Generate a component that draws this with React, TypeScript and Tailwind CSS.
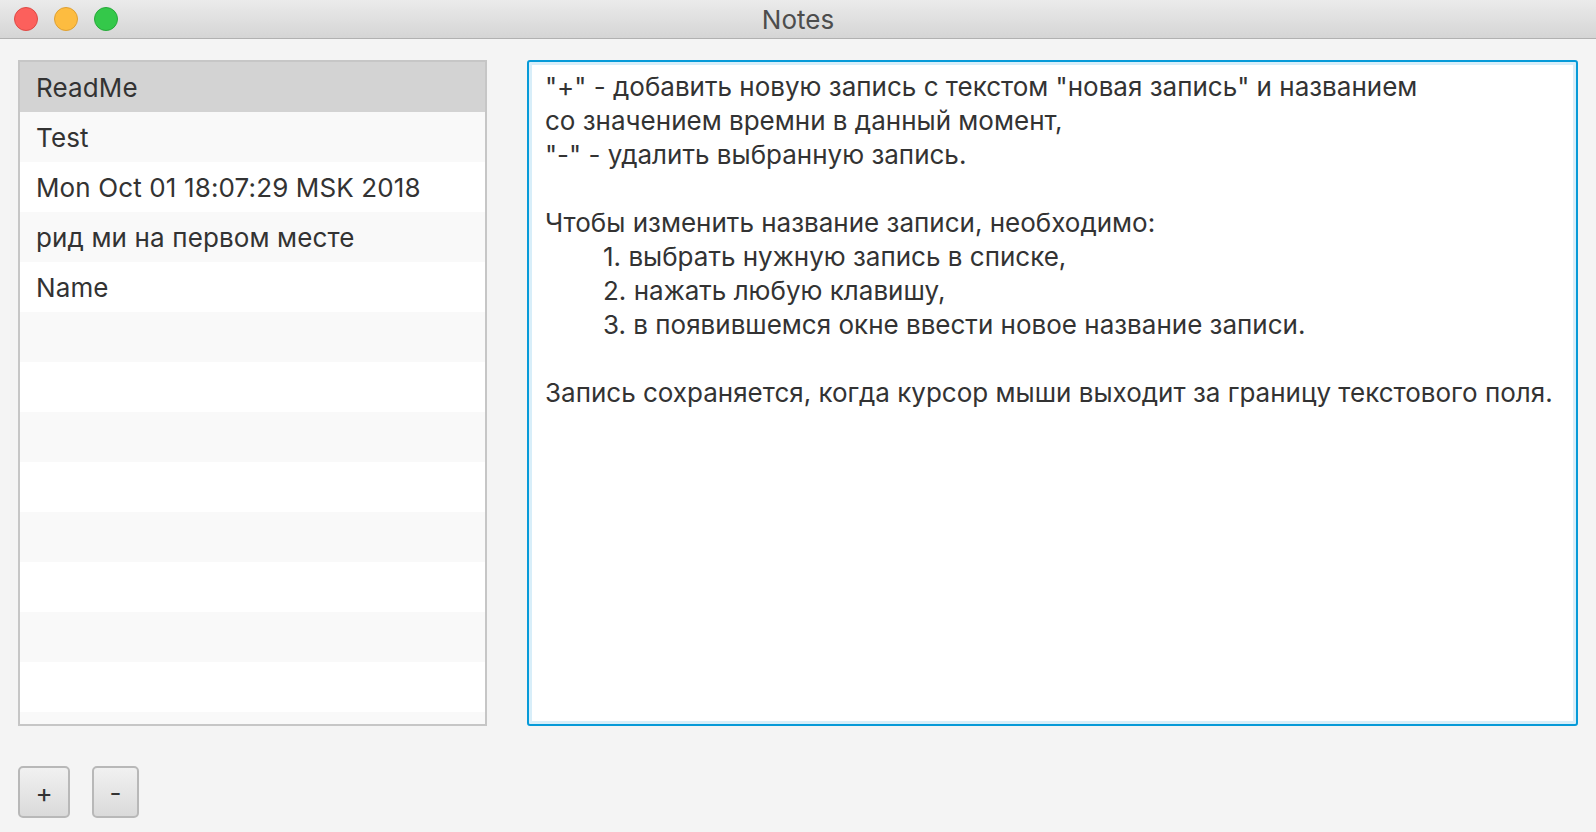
const rows = ["ReadMe", "Test", "Mon Oct 01 18:07:29 MSK 2018", "рид ми на первом месте", "Name"];

const lines: { text: string; indent?: boolean }[] = [
  { text: '"+" - добавить новую запись с текстом "новая запись" и названием' },
  { text: "со значением времни в данный момент," },
  { text: '"-" - удалить выбранную запись.' },
  { text: "" },
  { text: "Чтобы изменить название записи, необходимо:" },
  { text: "1. выбрать нужную запись в списке,", indent: true },
  { text: "2. нажать любую клавишу,", indent: true },
  { text: "3. в появившемся окне ввести новое название записи.", indent: true },
  { text: "" },
  { text: "Запись сохраняется, когда курсор мыши выходит за границу текстового поля." },
];

function App() {
  const slots = Array.from({ length: 14 }, (_, i) => rows[i] ?? "");
  return (
    <div className="w-[1596px] h-[832px] overflow-hidden bg-[#f4f4f4] flex flex-col font-['Inter','Noto_Sans',sans-serif] text-[#333333]">
      <div className="h-[39px] shrink-0 flex items-center relative bg-gradient-to-b from-[#ebebeb] to-[#d5d5d5] border-b border-[#b1b1b1]">
        <div className="flex gap-[16px] pl-[14px]">
          <span className="w-[24px] h-[24px] rounded-full bg-[#fc605c] border border-[#de4a45]" />
          <span className="w-[24px] h-[24px] rounded-full bg-[#fdbc40] border border-[#dea033]" />
          <span className="w-[24px] h-[24px] rounded-full bg-[#34c84a] border border-[#27a93a]" />
        </div>
        <div className="absolute inset-0 flex items-center justify-center text-[26px] text-[#4d4d4d]">Notes</div>
      </div>

      <div className="flex gap-[40px] px-[18px] pt-[21px]">
        <div className="w-[469px] h-[666px] shrink-0 border-2 border-[#c6c6c6] bg-white overflow-hidden">
          {slots.map((r, i) => (
            <div
              key={i}
              className={
                "h-[50px] flex items-center pl-[16px] text-[26px] tracking-[0.005em] whitespace-nowrap " +
                (i === 0 ? "bg-[#d3d3d3]" : i % 2 === 1 ? "bg-[#f9f9f9]" : "bg-white")
              }
            >
              {r}
            </div>
          ))}
        </div>

        <div className="flex-1 h-[666px] rounded-[3px] border-[2.5px] border-[#069ad8] bg-white shadow-[inset_0_0_0_3px_#d8eef9] pt-[8px] pl-[16px] text-[26px]">
          {lines.map((l, i) => (
            <div key={i} className={"h-[34px] leading-[34px] whitespace-nowrap " + (l.indent ? "pl-[58px]" : "")}>
              {l.text}
            </div>
          ))}
        </div>
      </div>

      <div className="flex gap-[22px] px-[18px] mt-[40px]">
        <button className="w-[52px] h-[52px] rounded-[5px] border-2 border-[#b8b8b8] bg-gradient-to-b from-[#f1f1f1] to-[#dadada] text-[26px] text-[#333]">
          +
        </button>
        <button className="w-[47px] h-[52px] rounded-[5px] border-2 border-[#b8b8b8] bg-gradient-to-b from-[#f1f1f1] to-[#dadada] text-[26px] text-[#333]">
          -
        </button>
      </div>
    </div>
  );
}

export default App;
